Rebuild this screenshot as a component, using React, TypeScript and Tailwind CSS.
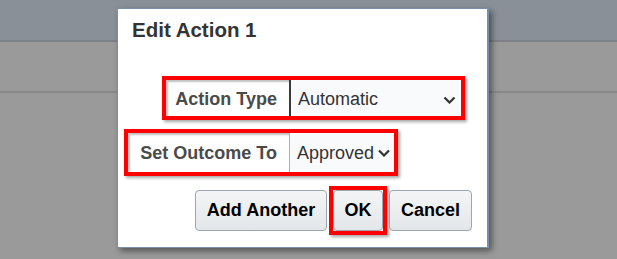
const font = { fontFamily: '"Liberation Sans", Arial, sans-serif' }

function Chevron({ className }: { className?: string }) {
  return (
    <svg viewBox="0 0 12 8" className={className} fill="none" stroke="#333" strokeWidth="2.2">
      <path d="M1 1.5 L6 6.5 L11 1.5" />
    </svg>
  )
}

const btn =
  "h-[41px] rounded-[4px] border border-[#9da6ae] bg-gradient-to-b from-[#f3f5f6] to-[#e4e7ea] text-[18px] font-bold text-black"

export default function App() {
  return (
    <div className="relative w-[617px] h-[259px] overflow-hidden bg-[#9a9a9a]" style={font}>
      <div className="h-[42px] bg-[#8a9098] border-b-2 border-[#7e8186]" />
      <div className="h-[51px] border-b-2 border-[#888888]" />

      <div className="absolute left-[117px] top-[8px] w-[372px] h-[240px] bg-white border border-[#7b8ea8] border-r-[2px] shadow-[3px_3px_6px_rgba(0,0,0,0.45)] flex flex-col">
        <div className="pl-[14px] pt-[9px] text-[20.5px] leading-[24px] font-bold text-[#333]">Edit Action 1</div>

        <div className="mt-[34px] flex flex-col items-start gap-[9px]">
          <div className="ml-[44px] flex h-[44px] border-4 border-[#ff0000] shadow-[inset_2px_2px_2px_rgba(0,0,0,0.25),2px_2px_3px_rgba(0,0,0,0.35)]">
            <div className="w-[123px] flex items-center justify-end pr-[12px] pt-[3px] text-[18px] font-bold text-[#4a4a4a]">
              Action Type
            </div>
            <div className="w-[172px] flex items-center justify-between pl-[7px] pr-[5px] pt-[3px] border-l-2 border-[#3a3a3a] bg-[#f9fafc] text-[18px] text-[#333]">
              <span>Automatic</span>
              <Chevron className="w-[13px] h-[8px]" />
            </div>
          </div>

          <div className="ml-[6px] flex h-[47px] border-4 border-[#ff0000] shadow-[inset_2px_2px_2px_rgba(0,0,0,0.25),2px_2px_3px_rgba(0,0,0,0.35)]">
            <div className="w-[161px] flex items-center justify-end pr-[12px] pt-[1px] text-[18px] font-bold text-[#4a4a4a]">
              Set Outcome To
            </div>
            <div className="w-[105px] flex items-center justify-between pl-[7px] pr-[4px] pt-[1px] border-l border-[#a9b0b8] bg-[#f9fafc] text-[18px] text-[#333]">
              <span>Approved</span>
              <Chevron className="w-[12px] h-[8px]" />
            </div>
          </div>
        </div>

        <div className="mt-[14px] flex justify-end gap-[6px] pr-[15px]">
          <button className={`w-[132px] ${btn}`}>Add Another</button>
          <div className="-mx-[4px] -my-[4px] border-4 border-[#ff0000] shadow-[2px_2px_3px_rgba(0,0,0,0.35)]">
            <button className={`w-[50px] ${btn}`}>OK</button>
          </div>
          <button className={`w-[83px] ${btn}`}>Cancel</button>
        </div>
      </div>
    </div>
  )
}
